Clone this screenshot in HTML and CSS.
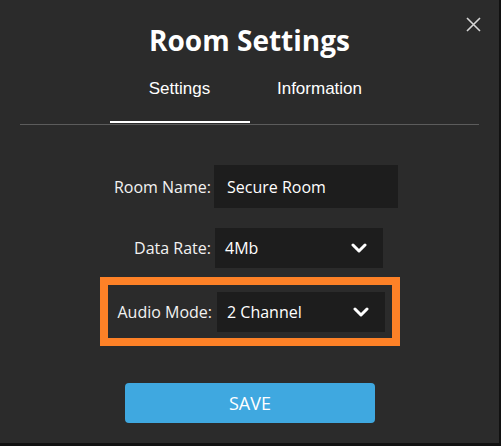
FILE: index.html
```html
<!DOCTYPE html>
<html lang="en">
<head>
<meta charset="utf-8">
<title>Room Settings</title>
<link rel="stylesheet" href="styles.css">
</head>
<body>
<div class="dialog">
  <button class="close" aria-label="Close">
    <svg width="15" height="15" viewBox="0 0 15 15"><path d="M1 1 L14 14 M14 1 L1 14" stroke="#d6d6d6" stroke-width="1.6" fill="none"/></svg>
  </button>
  <h1 class="title">Room Settings</h1>
  <div class="tabs">
    <div class="tab active">Settings</div>
    <div class="tab">Information</div>
  </div>
  <div class="form">
    <div class="row row-name">
      <span class="label">Room Name:</span>
      <div class="input">Secure Room</div>
    </div>
    <div class="row row-rate">
      <span class="label">Data Rate:</span>
      <div class="select">
        <span>4Mb</span>
        <svg class="chev" width="16" height="10" viewBox="0 0 16 10"><polyline points="2,2 8,8 14,2" stroke="#fff" stroke-width="3" fill="none" stroke-linecap="round" stroke-linejoin="round"/></svg>
      </div>
    </div>
    <div class="row row-audio">
      <span class="label">Audio Mode:</span>
      <div class="select">
        <span>2 Channel</span>
        <svg class="chev" width="16" height="10" viewBox="0 0 16 10"><polyline points="2,2 8,8 14,2" stroke="#fff" stroke-width="3" fill="none" stroke-linecap="round" stroke-linejoin="round"/></svg>
      </div>
    </div>
    <button class="save">SAVE</button>
  </div>
</div>
</body>
</html>
```

FILE: styles.css
```css
html, body {
  margin: 0;
  padding: 0;
  background: #111111;
}
body {
  width: 501px;
  height: 446px;
  overflow: hidden;
}
.dialog {
  position: relative;
  width: 499px;
  height: 443px;
  background: #2b2b2b;
  color: #ffffff;
  font-family: "Open Sans", "Noto Sans", sans-serif;
}
.close {
  position: absolute;
  left: 466px;
  top: 17px;
  padding: 0;
  margin: 0;
  border: 0;
  background: none;
  width: 15px;
  height: 15px;
  line-height: 0;
}
.title {
  margin: 0;
  padding-top: 21px;
  font-size: 28px;
  line-height: 38px;
  font-weight: 700;
  text-align: center;
  color: #ffffff;
}
.tabs {
  margin: 0 20px;
  display: flex;
  justify-content: center;
  border-bottom: 1px solid #5c5c5c;
}
.tab {
  width: 140px;
  padding: 20px 0 22px;
  margin-bottom: 1px;
  border-bottom: 2px solid transparent;
  font-family: "Liberation Sans", Arial, sans-serif;
  font-size: 17px;
  line-height: 20px;
  text-align: center;
  color: #ffffff;
}
.tab.active {
  border-bottom-color: #ffffff;
}
.form {
  padding-left: 100px;
  padding-top: 40px;
}
.row {
  display: flex;
  align-items: center;
  padding: 0 8px;
}
.label {
  flex-shrink: 0;
  width: 103px;
  text-align: right;
  font-size: 16px;
  color: #f2f2f2;
  white-space: nowrap;
}
.input {
  flex-shrink: 0;
  margin-left: 3px;
  width: 184px;
  height: 43px;
  box-sizing: border-box;
  padding-left: 13px;
  background: #1d1d1d;
  display: flex;
  align-items: center;
  font-size: 16px;
  color: #ffffff;
}
.select {
  flex-shrink: 0;
  margin-left: 4px;
  width: 168px;
  height: 40px;
  box-sizing: border-box;
  padding: 0 16px 0 10px;
  background: #1d1d1d;
  display: flex;
  align-items: center;
  justify-content: space-between;
  font-size: 16px;
  color: #ffffff;
}
.chev {
  display: block;
}
.row-rate {
  margin-top: 20px;
}
.row-audio {
  width: 300px;
  box-sizing: border-box;
  margin-top: 9px;
  border: 8px solid #fd8127;
  padding: 7px 7px 6px 0;
}
.row-audio .label {
  width: 104px;
}
.row-audio .select {
  margin-left: 5px;
}
.save {
  display: block;
  margin: 37px 0 0 25px;
  width: 250px;
  height: 40px;
  border: 0;
  border-radius: 4px;
  background: #3fa8e0;
  color: #ffffff;
  font-family: "Open Sans", "Noto Sans", sans-serif;
  font-size: 18px;
  padding: 0;
}
```
